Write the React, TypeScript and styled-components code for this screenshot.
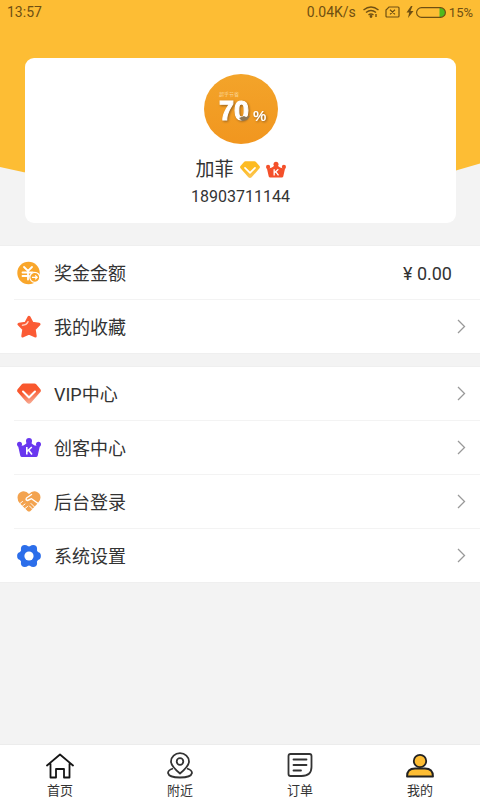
import React from "react";
import styled, { createGlobalStyle } from "styled-components";

const GlobalStyle = createGlobalStyle`
  *, *::before, *::after { box-sizing: border-box; }
  body {
    margin: 0;
    background: #f3f3f3;
    color: #333;
    font-family: Roboto, "Noto Sans CJK SC", sans-serif;
  }
  button { font: inherit; color: inherit; border: 0; padding: 0; background: none; cursor: pointer; }
  a { color: inherit; text-decoration: none; }
  h1, p, ul { margin: 0; padding: 0; font-weight: 400; }
  ul { list-style: none; }
  svg { display: block; flex: none; }
`;

const Page = styled.div`
  min-height: 100vh;
  display: flex;
  flex-direction: column;
`;

const Hero = styled.header`
  position: relative;
  padding-bottom: 23px;
  &::before {
    content: "";
    position: absolute;
    inset: 0 0 72px;
    background: #fdbd34;
    clip-path: polygon(0 0, 100% 0, 100% 94%, 95% 98%, 90% 100%, 10% 100%, 5% 99%, 0 96%);
  }
`;

const StatusBar = styled.div`
  position: relative;
  display: flex;
  align-items: center;
  justify-content: space-between;
  height: 24px;
  padding: 0 7px;
  font-size: 14px;
  color: #6f4f12;
`;

const StatusGroup = styled.div`
  display: flex;
  align-items: center;
`;

const StatusIcon = styled.span<{ $gap: number }>`
  margin-left: ${(p) => p.$gap}px;
`;

const BatteryText = styled.span`
  margin-left: 3px;
  font-size: 13px;
`;

const ProfileCard = styled.section`
  position: relative;
  margin: 34px 24px 0 25px;
  padding: 16px 0;
  border-radius: 9px;
  background: #fff;
  display: flex;
  flex-direction: column;
  align-items: center;
`;

const NameLine = styled.div`
  display: flex;
  align-items: center;
  gap: 6px;
  margin-top: 12px;
`;

const Name = styled.h1`
  font-size: 19px;
  line-height: 28px;
`;

const Phone = styled.p`
  margin-top: 3px;
  font-size: 16px;
  line-height: 20px;
`;

const Main = styled.main`
  flex: 1;
  display: flex;
  flex-direction: column;
  gap: 14px;
`;

const Group = styled.ul`
  background: #fff;
  box-shadow: 0 0 1px #ddd;
`;

const Item = styled.li`
  & + &::before {
    content: "";
    display: block;
    height: 1px;
    margin-left: 14px;
    background: #f3f3f3;
  }
`;

const RowButton = styled.button`
  width: 100%;
  height: 53px;
  padding: 0 14px 0 17px;
  display: flex;
  align-items: center;
  gap: 13px;
  text-align: left;
  font-size: 18px;
  line-height: 26px;
`;

const RowLabel = styled.span`
  flex: 1;
  padding-top: 2px;
`;

const Amount = styled.span`
  margin-right: 14px;
  padding-top: 2px;
`;

const TabBar = styled.nav`
  display: grid;
  grid-template-columns: repeat(4, 1fr);
  background: #fff;
  border-top: 1px solid #ececec;
`;

const Tab = styled.a`
  display: flex;
  flex-direction: column;
  align-items: center;
  padding: 5px 0 0;
  gap: 2px;
  font-size: 13px;
  line-height: 18px;
`;

const Shadowed = styled.g`
  font-family: "Liberation Sans", Arial, sans-serif;
  font-weight: 700;
  fill: #fff;
  filter: drop-shadow(1px 1px 1px #95601f);
`;

const AvatarPicture = () => (
  <svg width="74" height="70" viewBox="0 0 74 70" role="img" aria-label="70%">
    <defs>
      <linearGradient id="avatar" x1="0" y1="0" x2="0" y2="1">
        <stop offset="0" stopColor="#f3a42a" />
        <stop offset="1" stopColor="#f1961f" />
      </linearGradient>
    </defs>
    <ellipse cx="37" cy="35" rx="37" ry="35" fill="url(#avatar)" />
    <text x="15" y="22" fontSize="5" fill="#fbd79a">超乎节省</text>
    <Shadowed>
      <text x="15" y="46" fontSize="27" stroke="#fff">70</text>
      <text x="49" y="47" fontSize="15">%</text>
    </Shadowed>
    <path d="M35 44l5-2 2 1 4-1-3 4-5 1z" fill="#8c7656" />
  </svg>
);

const Diamond = ({ size, from, to }: { size: number; from: string; to: string }) => (
  <svg width={size} height={size} viewBox="0 0 24 24">
    <defs>
      <linearGradient id={`gem${size}`} x1="0" y1="0" x2="0.3" y2="1">
        <stop offset="0.5" stopColor={from} />
        <stop offset="1" stopColor={to} />
      </linearGradient>
    </defs>
    <path
      d="M6.500 1.500h11q1 0 1.700.8l4.200 5q1 1.300 0 2.700L14 20.800q-2 1.800-4 0L.6 10q-1-1.400 0-2.700l4.200-5q.7-.8 1.700-.8z"
      fill={`url(#gem${size})`}
    />
    <path d="M6 9.500l6 6 6-6" fill="none" stroke="#fff" strokeWidth="2" strokeLinecap="round" strokeLinejoin="round" />
  </svg>
);

const Crown = ({ size, color }: { size: number; color: string }) => (
  <svg width={size} height={size} viewBox="0 0 24 24">
    <g fill={color}>
      <circle cx="12" cy="5" r="3" />
      <circle cx="2.500" cy="8.300" r="2.500" />
      <circle cx="21.500" cy="8.300" r="2.500" />
      <path d="M1 9.500Q6 10.500 8 8.500q2-1.200 2-3h4q0 1.800 2 3 2 2 7 1l-2.300 10.200q-.4 1.300-1.700 1.300H5q-1.300 0-1.700-1.300z" />
    </g>
    <path d="M9.800 11v7.500M14.800 11l-4.700 4.300M11.600 14l3.400 4.500" stroke="#fff" strokeWidth="1.600" fill="none" />
  </svg>
);

const CoinIcon = () => (
  <svg width="24" height="24" viewBox="0 0 24 24">
    <circle cx="11.500" cy="12" r="11.200" fill="#f9a62b" />
    <path d="M7 6l4 4 4-4M11 10v8.500M5.500 11.500h10.500M5.500 15H12" fill="none" stroke="#fff" strokeWidth="1.800" strokeLinecap="round" />
    <circle cx="17.800" cy="16.300" r="5" fill="#f9a62b" stroke="#fff" strokeWidth="1.200" />
    <path d="M15 16.300h5M18.200 14.300l2 2-2 2" fill="none" stroke="#fff" strokeWidth="1.200" />
  </svg>
);

const StarIcon = () => (
  <svg width="24" height="24" viewBox="0 0 24 24">
    <path
      d="M12 2.300l3.200 5.900 6.800 1.100-4.800 5 1 6.700-6.200-2.900L5.800 21l1-6.700-4.800-5 6.800-1.100z"
      fill="#fb5b35"
      stroke="#fb5b35"
      strokeWidth="3"
      strokeLinejoin="round"
    />
    <path d="M5.500 10.200q4 0 5.500-3.400" fill="none" stroke="#ffd3c5" strokeWidth="1.500" strokeLinecap="round" />
  </svg>
);

const HandshakeIcon = () => (
  <svg width="24" height="24" viewBox="0 0 24 24">
    <path
      d="M12 4Q15 .5 19 1.500q4.500 1.500 4.500 6 0 3-2.500 5.500l-7.500 8q-1.500 1.200-3 0L3 13.500Q.5 11.500.5 7.500.5 3 5 1.500q4-1 7 2.500z"
      fill="#f3a34f"
    />
    <g fill="none" stroke="#fff" strokeLinecap="round" strokeLinejoin="round">
      <path d="M14.500 4.500L9.500 8q-1.200 2 1 2.500l4-1.800 7 5" strokeWidth="1.400" />
      <path d="M3 13.500l2.500-2M5.500 16l2.500-2M8 18.500l2.500-2M14 13.500l4 4M12.500 16l3 3" strokeWidth="1" />
    </g>
  </svg>
);

const GearIcon = () => (
  <svg width="24" height="24" viewBox="0 0 24 24">
    <g fill="#2c6eea">
      <circle cx="12" cy="12" r="9.800" />
      <circle cx="20" cy="12" r="3.900" />
      <circle cx="4" cy="12" r="3.900" />
      <circle cx="16.200" cy="5" r="3.900" />
      <circle cx="7.800" cy="5" r="3.900" />
      <circle cx="16.200" cy="19" r="3.900" />
      <circle cx="7.800" cy="19" r="3.900" />
    </g>
    <circle cx="12" cy="12" r="4.600" fill="#fff" />
  </svg>
);

const ChevronIcon = () => (
  <svg width="9" height="15" viewBox="0 0 9 15">
    <path d="M1 1l6.500 6.500L1 14" fill="none" stroke="#999" strokeWidth="1.300" />
  </svg>
);

const WifiIcon = () => (
  <svg width="16" height="12" viewBox="0 0 16 12" fill="none" stroke="currentColor" strokeWidth="1.400">
    <path d="M.5 4q7.500-6 15 0M3 6.500q5-4 10 0M5.500 9q2.500-2 5 0" />
    <circle cx="8" cy="10.500" r=".7" fill="currentColor" />
    <path d="M13 8v3" />
  </svg>
);

const SimIcon = () => (
  <svg width="15" height="12" viewBox="0 0 15 12" fill="none" stroke="currentColor" strokeWidth="1.200">
    <path d="M4 1h9q1 0 1 1v8q0 1-1 1H2q-1 0-1-1V4zM5 3.800l5 4.600M10 3.800L5 8.400" />
  </svg>
);

const BoltIcon = () => (
  <svg width="8" height="12" viewBox="0 0 8 12" fill="currentColor">
    <path d="M5 0L.5 6.500h2.700L2 12l5.500-7H4.500L6.500 0z" />
  </svg>
);

const BatteryIcon = () => (
  <svg width="30" height="11" viewBox="0 0 30 11">
    <path d="M23.500 1H25a4.500 4.500 0 010 9h-1.500z" fill="#51b91c" />
    <rect x=".6" y=".6" width="28.800" height="9.800" rx="4.900" fill="none" stroke="currentColor" strokeWidth="1.100" />
  </svg>
);

const HomeIcon = () => (
  <svg width="30" height="30" viewBox="0 0 30 30" fill="none" stroke="#151515" strokeWidth="1.800" strokeLinejoin="round" strokeLinecap="round">
    <path d="M2 15.500L15 4.500l13 11M5.500 13.500v14h5.500V19h8v8.500h5.500v-14" />
  </svg>
);

const PinIcon = () => (
  <svg width="30" height="30" viewBox="0 0 30 30" fill="none" stroke="#333" strokeWidth="1.800" strokeLinejoin="round">
    <path d="M15 23.500q-9-7.500-9-12a9 8.300 0 0118 0q0 4.500-9 12z" />
    <circle cx="15" cy="11.500" r="3.300" />
    <path d="M8 18.500Q3 20 3 23q1 4.500 12 4.500T27 23q0-3-5-4.500" />
  </svg>
);

const OrderIcon = () => (
  <svg width="30" height="30" viewBox="0 0 30 30" fill="none" stroke="#333" strokeWidth="1.800" strokeLinejoin="round" strokeLinecap="round">
    <path d="M5.500 4h19q2 0 2 2v11q0 9-10 9h-11q-2 0-2-2V6q0-2 2-2z" />
    <path d="M8.500 9.500h13M8.500 15h13M8.500 20.500h7.500" />
  </svg>
);

const UserIcon = () => (
  <svg width="30" height="30" viewBox="0 0 30 30" fill="#fdbd34" stroke="#222" strokeWidth="1.800" strokeLinejoin="round">
    <circle cx="15" cy="11" r="6.200" />
    <path d="M2 26.500q0-8 8-8h10q8 0 8 8z" />
  </svg>
);

type Entry = { label: string; icon: React.ReactNode; amount?: string };

const groups: Entry[][] = [
  [
    { label: "奖金金额", icon: <CoinIcon />, amount: "¥ 0.00" },
    { label: "我的收藏", icon: <StarIcon /> },
  ],
  [
    { label: "VIP中心", icon: <Diamond size={24} from="#f9582e" to="#f7a38a" /> },
    { label: "创客中心", icon: <Crown size={24} color="#6937ef" /> },
    { label: "后台登录", icon: <HandshakeIcon /> },
    { label: "系统设置", icon: <GearIcon /> },
  ],
];

const tabs: Entry[] = [
  { label: "首页", icon: <HomeIcon /> },
  { label: "附近", icon: <PinIcon /> },
  { label: "订单", icon: <OrderIcon /> },
  { label: "我的", icon: <UserIcon /> },
];

export default function App() {
  return (
    <>
      <GlobalStyle />
      <Page>
        <Hero>
          <StatusBar>
            <span>13:57</span>
            <StatusGroup>
              <span>0.04K/s</span>
              <StatusIcon $gap={7}><WifiIcon /></StatusIcon>
              <StatusIcon $gap={6}><SimIcon /></StatusIcon>
              <StatusIcon $gap={6}><BoltIcon /></StatusIcon>
              <StatusIcon $gap={2}><BatteryIcon /></StatusIcon>
              <BatteryText>15%</BatteryText>
            </StatusGroup>
          </StatusBar>
          <ProfileCard>
            <AvatarPicture />
            <NameLine>
              <Name>加菲</Name>
              <Diamond size={20} from="#fdbb22" to="#fcc552" />
              <Crown size={20} color="#f4502a" />
            </NameLine>
            <Phone>18903711144</Phone>
          </ProfileCard>
        </Hero>
        <Main>
          {groups.map((entries, i) => (
            <Group key={i}>
              {entries.map((entry) => (
                <Item key={entry.label}>
                  <RowButton type="button">
                    {entry.icon}
                    <RowLabel>{entry.label}</RowLabel>
                    {entry.amount ? <Amount>{entry.amount}</Amount> : <ChevronIcon />}
                  </RowButton>
                </Item>
              ))}
            </Group>
          ))}
        </Main>
        <TabBar>
          {tabs.map((tab) => (
            <Tab key={tab.label} href="#" aria-current={tab.label === "我的" ? "page" : undefined}>
              {tab.icon}
              {tab.label}
            </Tab>
          ))}
        </TabBar>
      </Page>
    </>
  );
}
